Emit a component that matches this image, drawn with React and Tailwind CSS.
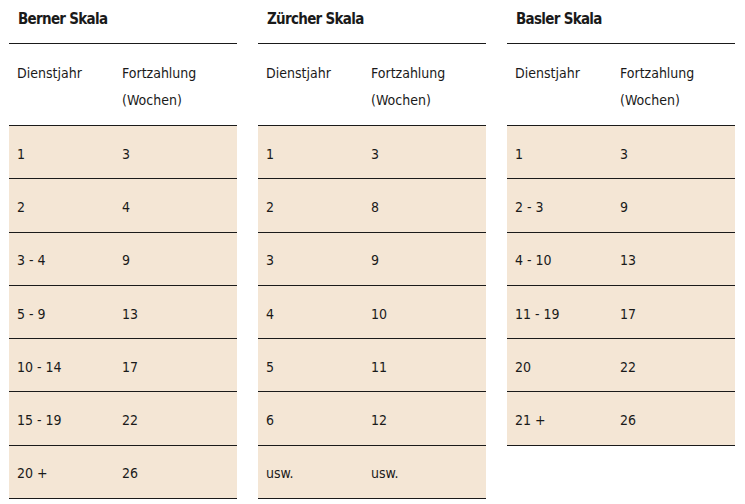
import React from "react";

const scales = [
  {
    name: "Berner Skala",
    rows: [
      ["1", "3"],
      ["2", "4"],
      ["3 - 4", "9"],
      ["5 - 9", "13"],
      ["10 - 14", "17"],
      ["15 - 19", "22"],
      ["20 +", "26"],
    ],
  },
  {
    name: "Zürcher Skala",
    rows: [
      ["1", "3"],
      ["2", "8"],
      ["3", "9"],
      ["4", "10"],
      ["5", "11"],
      ["6", "12"],
      ["usw.", "usw."],
    ],
  },
  {
    name: "Basler Skala",
    rows: [
      ["1", "3"],
      ["2 - 3", "9"],
      ["4 - 10", "13"],
      ["11 - 19", "17"],
      ["20", "22"],
      ["21 +", "26"],
    ],
  },
];

const Scale = ({ scale }) => (
  <div className="w-[228px]">
    <h2 className="h-[43px] pl-[9px] pt-[8px] text-[15px] font-bold leading-[22px] tracking-[-0.7px] text-[#1a1a1a]">
      {scale.name}
    </h2>
    <div className="flex h-[83px] border-y border-[#1a1a1a] pt-[16px] text-[14px] leading-[27px] text-[#1a1a1a]">
      <div className="w-[113px] pl-[8px]">Dienstjahr</div>
      <div>
        Fortzahlung
        <br />
        (Wochen)
      </div>
    </div>
    {scale.rows.map(([year, weeks], i) => (
      <div
        key={i}
        className="flex h-[53.3px] items-center border-b border-[#1a1a1a] bg-[#f4e6d5] pt-[4px] text-[14px] text-[#1a1a1a]"
      >
        <div className="w-[113px] pl-[8px]">{year}</div>
        <div>{weeks}</div>
      </div>
    ))}
  </div>
);

export default function App() {
  return (
    <div className="flex h-[504px] w-[745px] gap-[21px] bg-white pl-[9px] font-['DejaVu_Sans_Condensed','DejaVu_Sans',sans-serif]">
      {scales.map((s) => (
        <Scale key={s.name} scale={s} />
      ))}
    </div>
  );
}
